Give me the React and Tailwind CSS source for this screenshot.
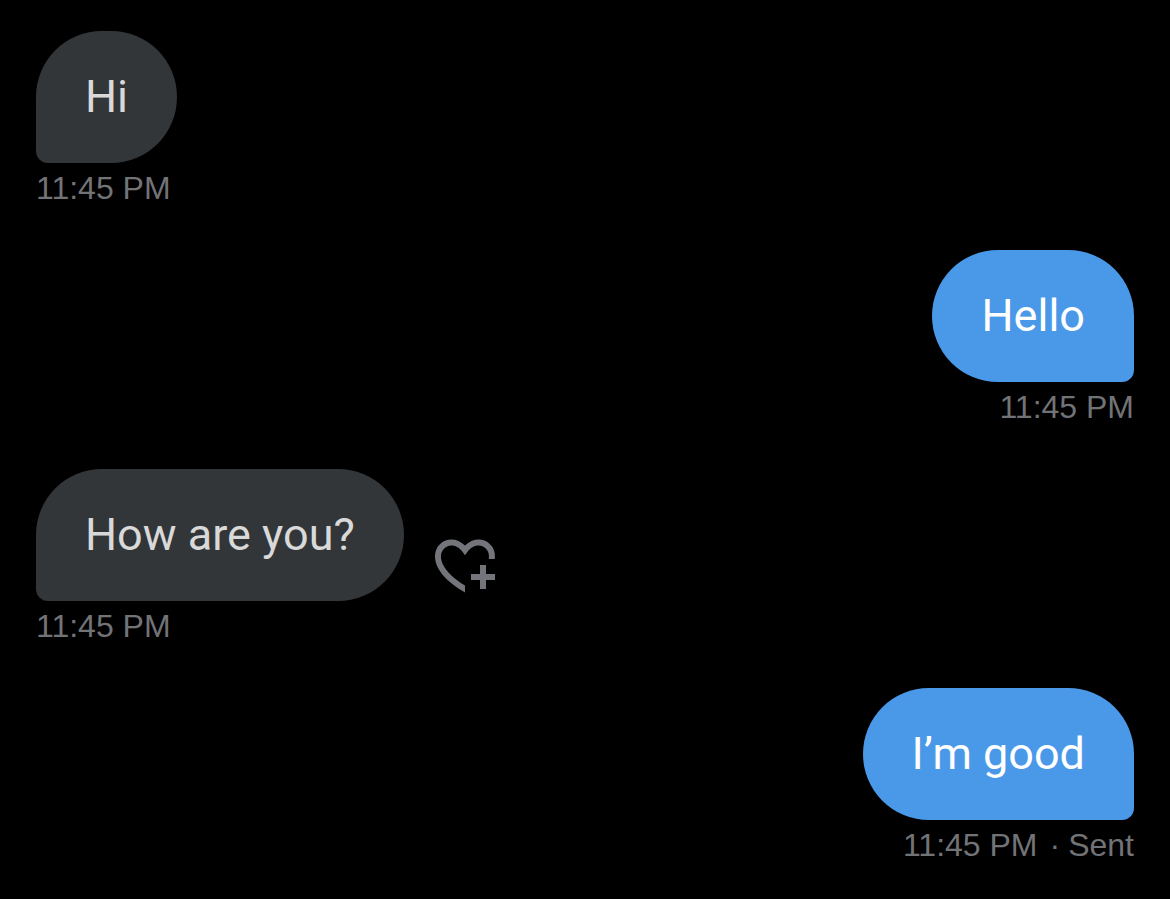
import React from 'react';

const messages = [
  { id: 1, text: 'Hi', time: '11:45 PM' },
  { id: 2, text: 'Hello', time: '11:45 PM', mine: true },
  { id: 3, text: 'How are you?', time: '11:45 PM', canReact: true },
  { id: 4, text: 'I’m good', time: '11:45 PM', mine: true, status: 'Sent' },
];

const HeartPlus = () => (
  <svg viewBox="0 0 24 24" className="size-18" fill="currentColor" aria-hidden="true">
    <path d="M17 12v3h-3v2h3v3h2v-3h3v-2h-3v-3h-2zm-5 6.839c-3.871-2.34-6.053-4.639-7.127-6.609-1.112-2.04-1.031-3.7-.479-4.82.561-1.13 1.667-1.84 2.91-1.91 1.222-.06 2.68.51 3.892 2.16l.806 1.09.805-1.09c1.211-1.65 2.668-2.22 3.89-2.16 1.242.07 2.347.78 2.908 1.91.334.677.49 1.554.321 2.59h2.011c.153-1.283-.039-2.469-.539-3.48-.887-1.79-2.647-2.91-4.601-3.01-1.65-.09-3.367.56-4.796 2.01-1.43-1.45-3.147-2.1-4.798-2.01-1.954.1-3.714 1.22-4.601 3.01-.896 1.81-.846 4.17.514 6.67 1.353 2.48 4.003 5.12 8.382 7.67l.502.299v-2.32z" />
  </svg>
);

const Message = ({ text, time, mine, status, canReact }) => (
  <li className={mine ? 'flex flex-col items-end' : 'flex flex-col items-start'}>
    <div className="flex items-end gap-[25px]">
      <p
        className={
          mine
            ? 'rounded-[66px] rounded-br-xl bg-[#4a99e9] px-[49px] py-9 text-[45px] leading-[60px] text-white'
            : 'rounded-[66px] rounded-bl-xl bg-[#333639] px-[49px] py-9 text-[45px] leading-[60px] text-[#d9d9d9]'
        }
      >
        {text}
      </p>
      {canReact && (
        <button type="button" aria-label="Add reaction" className="text-[#73757b]">
          <HeartPlus />
        </button>
      )}
    </div>
    <div className="mt-2 flex gap-3 font-['Liberation_Sans',sans-serif] text-[32px] leading-[34px] text-[#727377]">
      <time>{time}</time>
      {status && (
        <span className="flex gap-2">
          <span>·</span>
          <span>{status}</span>
        </span>
      )}
    </div>
  </li>
);

const App = () => {
  return (
    <main className="min-h-screen bg-black px-9 pt-[31px] font-['Roboto',sans-serif]">
      <ul className="flex flex-col gap-[45px]">
        {messages.map((message) => (
          <Message key={message.id} {...message} />
        ))}
      </ul>
    </main>
  );
};

export default App;
